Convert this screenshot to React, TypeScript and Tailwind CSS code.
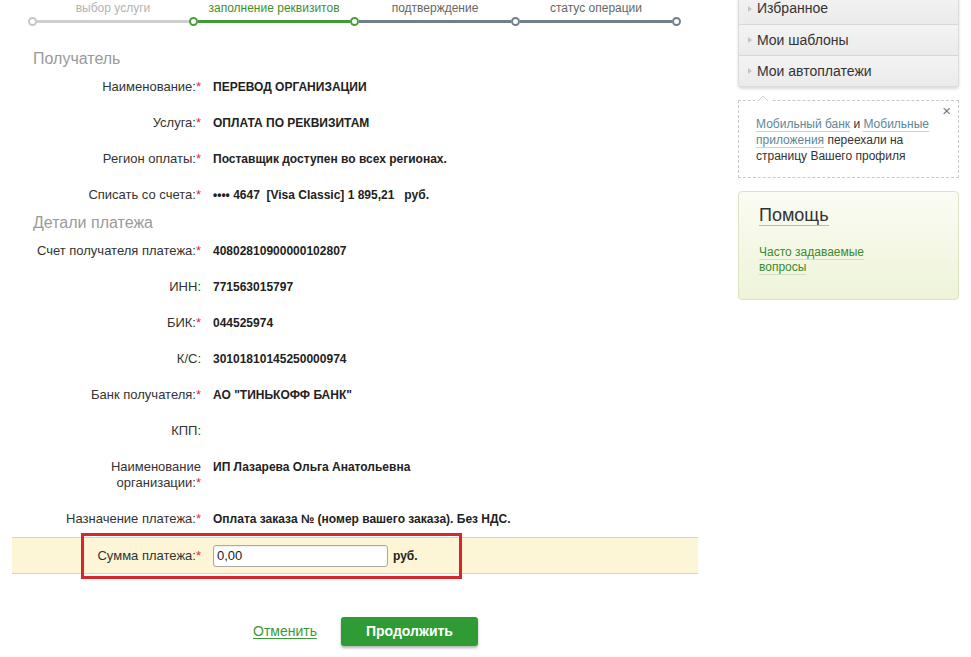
import { FC, ReactNode } from 'react'

const steps = [
  { label: 'выбор услуги', text: 'text-[#b3b3b3]', dot: 'border-[#c6c6c6]', line: 'bg-[#cfcfcf]' },
  { label: 'заполнение реквизитов', text: 'text-[#3f8f2f]', dot: 'border-[#4c9c3c]', line: 'bg-[#409b34]' },
  { label: 'подтверждение', text: 'text-[#666]', dot: 'border-[#4c9c3c]', line: 'bg-[#6f808b]' },
  { label: 'статус операции', text: 'text-[#666]', dot: 'border-[#6f808b]', line: 'bg-[#6f808b]' }
]

const Stepper: FC = () => (
  <div className="flex w-[681px] items-end pl-[28px]">
    {steps.map(s => (
      <div key={s.label} className="flex flex-1 flex-col">
        <div className={`h-[16px] pl-[9px] text-center text-[12px] leading-[16px] ${s.text}`}>{s.label}</div>
        <div className="flex h-[10px] items-center">
          <div className={`h-[9px] w-[9px] shrink-0 rounded-full border-2 bg-white ${s.dot}`} />
          <div className={`h-[3px] flex-1 ${s.line}`} />
        </div>
      </div>
    ))}
    <div className="flex h-[10px] items-center">
      <div className="h-[9px] w-[9px] rounded-full border-2 border-[#6f808b] bg-white" />
    </div>
  </div>
)

const Star = () => <span className="text-[#e02b2b]">*</span>

interface RowProps {
  label: ReactNode
  required?: boolean
  children?: ReactNode
}

const Row: FC<RowProps> = ({ label, required = true, children }) => (
  <div className="flex items-start py-[10px] leading-[16px]">
    <div className="w-[201px] shrink-0 text-right text-[13px] text-[#333]">
      {label}
      {required && <Star />}
    </div>
    <div className="pl-[12px] text-[12px] font-bold text-[#222]">{children}</div>
  </div>
)

const Heading: FC<{ children: ReactNode }> = ({ children }) => (
  <div className="pl-[33px] text-[16px] leading-[20px] text-[#9a9a9a]">{children}</div>
)

const menu = ['Избранное', 'Мои шаблоны', 'Мои автоплатежи']

const Sidebar: FC = () => (
  <div className="flex w-[221px] flex-col">
    <div className="-mt-[7px] overflow-hidden rounded-b-[4px] border border-t-0 border-[#dcdcdc] bg-[#efefef] shadow-[0_2px_3px_rgba(0,0,0,0.15)]">
      {menu.map((m, i) => (
        <div
          key={m}
          className={`flex h-[31px] items-center gap-[4px] pl-[8px] text-[14px] text-[#333] ${
            i > 0 ? 'border-t border-[#d6d6d6]' : ''
          } bg-gradient-to-b from-[#f3f3f3] to-[#ebebeb]`}
        >
          <svg width="6" height="8" viewBox="0 0 6 8">
            <path d="M1 1 L5 4 L1 7 Z" fill="#c4c4c4" />
          </svg>
          <span>{m}</span>
        </div>
      ))}
    </div>

    <div className="relative mt-[13px] border border-dashed border-[#c9c9c9] bg-white px-[17px] pt-[15px] pb-[13px] text-[12px] leading-[16px] text-[#333]">
      <svg className="absolute -top-[8px] left-[16px]" width="16" height="9" viewBox="0 0 16 9">
        <rect x="0" y="6" width="16" height="4" fill="white" />
        <polyline points="3,8 8,3 13,8" fill="none" stroke="#cfcfcf" strokeWidth="1" />
      </svg>
      <span className="absolute right-[7px] top-[2px] text-[15px] leading-[15px] text-[#777]">×</span>
      <div>
        <span className="border-b border-[#c8d3d8] text-[#5d8797]">Мобильный банк</span> и{' '}
        <span className="border-b border-[#c8d3d8] text-[#5d8797]">Мобильные</span>
      </div>
      <div>
        <span className="border-b border-[#c8d3d8] text-[#5d8797]">приложения</span> переехали на
      </div>
      <div>страницу Вашего профиля</div>
    </div>

    <div className="mt-[13px] h-[109px] rounded-[4px] border border-[#dde4c3] bg-gradient-to-b from-[#fbfcf3] to-[#eef4d9] pl-[20px] pt-[12px]">
      <span className="border-b border-[#b9b9b9] text-[18px] leading-[22px] text-[#333]">Помощь</span>
      <div className="mt-[17px] text-[12px] leading-[15px] text-[#3a8a2c]">
        <div>
          <span className="border-b border-[#cfe0c0]">Часто задаваемые</span>
        </div>
        <div>
          <span className="border-b border-[#cfe0c0]">вопросы</span>
        </div>
      </div>
    </div>
  </div>
)

export default function App() {
  return (
    <div className="h-[657px] w-[971px] overflow-hidden bg-white font-['Liberation_Sans',Arial,sans-serif]">
      <div className="flex gap-[38px]">
        <div className="flex w-[700px] shrink-0 flex-col">
          <Stepper />

          <div className="mt-[23px]">
            <Heading>Получатель</Heading>
            <Row label="Наименование:">ПЕРЕВОД ОРГАНИЗАЦИИ</Row>
            <Row label="Услуга:">ОПЛАТА ПО РЕКВИЗИТАМ</Row>
            <Row label="Регион оплаты:">Поставщик доступен во всех регионах.</Row>
            <Row label="Списать со счета:">
              <span className="whitespace-pre">•••• 4647  [Visa Classic] 1 895,21   руб.</span>
            </Row>

            <Heading>Детали платежа</Heading>
            <Row label="Счет получателя платежа:">40802810900000102807</Row>
            <Row label="ИНН:" required={false}>
              771563015797
            </Row>
            <Row label="БИК:">044525974</Row>
            <Row label="К/С:" required={false}>
              30101810145250000974
            </Row>
            <Row label="Банк получателя:">АО "ТИНЬКОФФ БАНК"</Row>
            <Row label="КПП:" required={false} />
            <Row
              label={
                <>
                  Наименование
                  <br />
                  организации:
                </>
              }
            >
              ИП Лазарева Ольга Анатольевна
            </Row>
            <Row label="Назначение платежа:">Оплата заказа № (номер вашего заказа). Без НДС.</Row>
          </div>

          <div className="relative ml-[12px] mr-[2px] flex h-[37px] items-center border-y border-[#f0d76a] bg-[#fcf6d6]">
            <div className="w-[189px] shrink-0 text-right text-[13px] text-[#333]">
              Сумма платежа:
              <Star />
            </div>
            <div className="ml-[12px] flex h-[22px] w-[175px] items-center rounded-[3px] border border-[#a9a9a9] bg-white px-[3px] text-[13px] text-[#222] shadow-[inset_0_1px_2px_rgba(0,0,0,0.08)]">
              0,00
            </div>
            <span className="ml-[5px] text-[12px] font-bold text-[#222]">руб.</span>
            <div className="pointer-events-none absolute left-[69px] top-[-5px] h-[46px] w-[381px] border-[3px] border-[#d8262a]" />
          </div>

          <div className="mt-[43px] flex items-center pl-[253px]">
            <span className="text-[14px] text-[#3a9a35] underline underline-offset-2">Отменить</span>
            <div className="ml-[24px] flex h-[29px] w-[137px] items-center justify-center rounded-[3px] bg-[#2f9b35] text-[14px] font-bold text-white shadow-[0_2px_3px_rgba(0,0,0,0.3)]">
              Продолжить
            </div>
          </div>
        </div>

        <Sidebar />
      </div>
    </div>
  )
}
